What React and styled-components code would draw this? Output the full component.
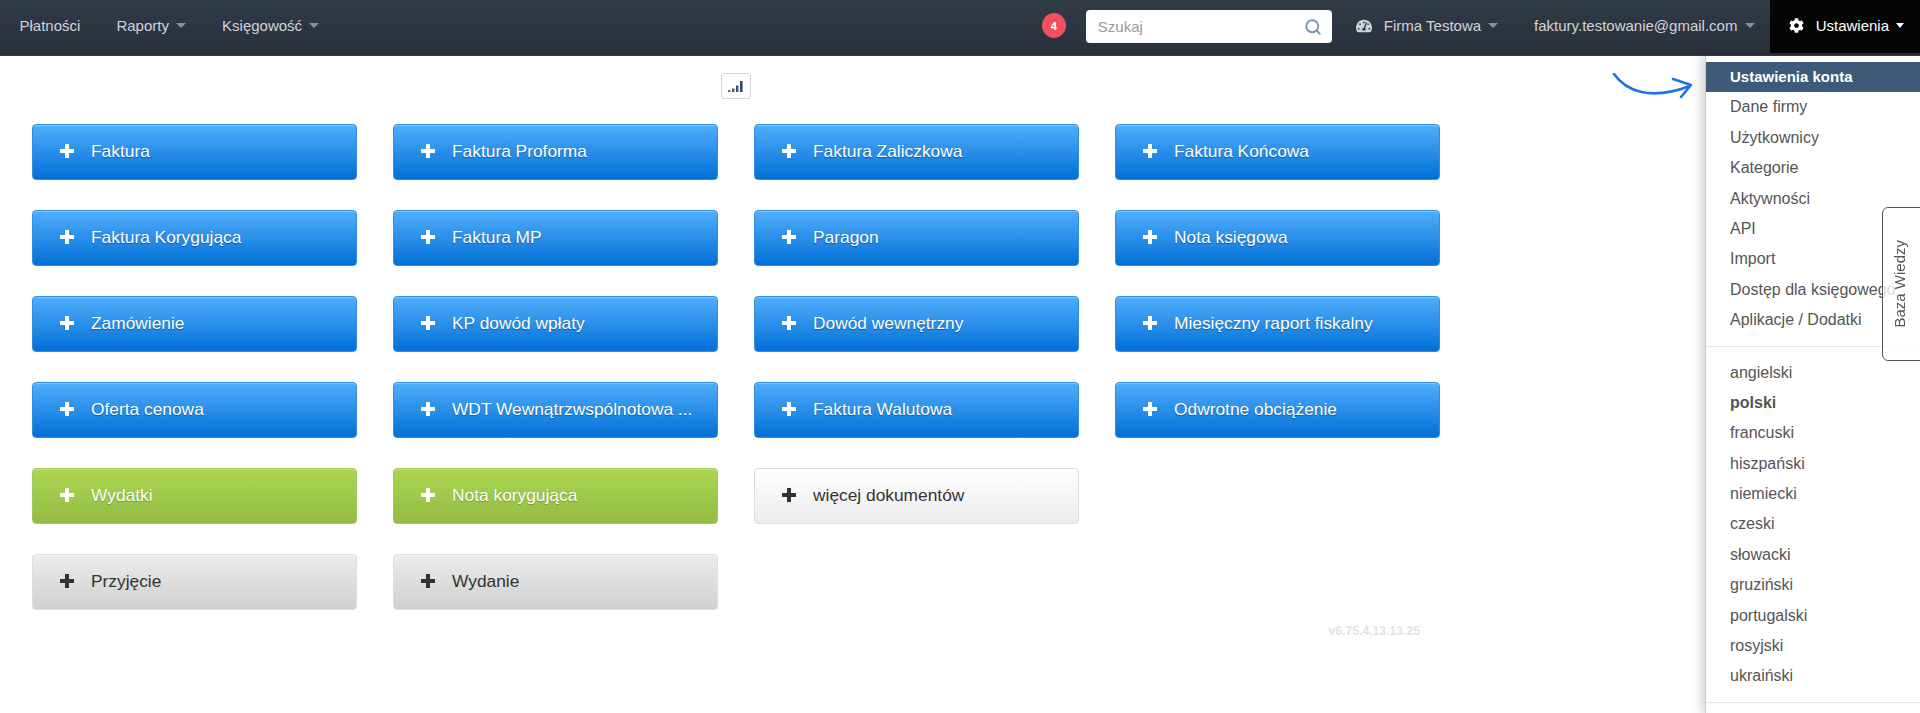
import React from "react";
import styled, { createGlobalStyle } from "styled-components";
import { FaCog, FaTachometerAlt } from "react-icons/fa";
import { FiSearch } from "react-icons/fi";

const documents = [
  { label: "Faktura", kind: "blue" },
  { label: "Faktura Proforma", kind: "blue" },
  { label: "Faktura Zaliczkowa", kind: "blue" },
  { label: "Faktura Końcowa", kind: "blue" },
  { label: "Faktura Korygująca", kind: "blue" },
  { label: "Faktura MP", kind: "blue" },
  { label: "Paragon", kind: "blue" },
  { label: "Nota księgowa", kind: "blue" },
  { label: "Zamówienie", kind: "blue" },
  { label: "KP dowód wpłaty", kind: "blue" },
  { label: "Dowód wewnętrzny", kind: "blue" },
  { label: "Miesięczny raport fiskalny", kind: "blue" },
  { label: "Oferta cenowa", kind: "blue" },
  { label: "WDT Wewnątrzwspólnotowa ...", kind: "blue" },
  { label: "Faktura Walutowa", kind: "blue" },
  { label: "Odwrotne obciążenie", kind: "blue" },
  { label: "Wydatki", kind: "green" },
  { label: "Nota korygująca", kind: "green" },
  { label: "więcej dokumentów", kind: "light" },
  { label: "Przyjęcie", kind: "gray", newRow: true },
  { label: "Wydanie", kind: "gray" },
];

const settingsLinks = [
  "Dane firmy",
  "Użytkownicy",
  "Kategorie",
  "Aktywności",
  "API",
  "Import",
  "Dostęp dla księgowego",
  "Aplikacje / Dodatki",
];

const languages = [
  "angielski",
  "polski",
  "francuski",
  "hiszpański",
  "niemiecki",
  "czeski",
  "słowacki",
  "gruziński",
  "portugalski",
  "rosyjski",
  "ukraiński",
];

const kinds = {
  blue: {
    bg: "linear-gradient(#51aefb, #016fd6)",
    border: "#2f8fdc",
    color: "#fff",
    shadow: "0 1px 1px rgba(0, 0, 0, 0.35)",
  },
  green: {
    bg: "linear-gradient(#aad651, #93bc45)",
    border: "#a2c862",
    color: "#fff",
    shadow: "0 1px 1px rgba(0, 0, 0, 0.25)",
  },
  light: {
    bg: "linear-gradient(#fff, #ececec)",
    border: "#dcdcdc",
    color: "#333",
    shadow: "none",
  },
  gray: {
    bg: "linear-gradient(#ececec, #d0d0d0)",
    border: "#dedede",
    color: "#333",
    shadow: "none",
  },
};

function App() {
  return (
    <>
      <GlobalStyle />
      <Navbar>
        <NavItem>Płatności</NavItem>
        <NavItem>
          Raporty <Caret />
        </NavItem>
        <NavItem>
          Księgowość <Caret />
        </NavItem>
        <NavRight>
          <Badge>4</Badge>
          <SearchBox>
            <SearchInput placeholder="Szukaj" />
            <FiSearch size={18} color="#7f93a8" strokeWidth={2.4} />
          </SearchBox>
          <NavItem>
            <FaTachometerAlt size={16} />
            <NavIconLabel>Firma Testowa</NavIconLabel>
            <Caret />
          </NavItem>
          <UserItem>
            faktury.testowanie@gmail.com <Caret />
          </UserItem>
          <SettingsItem>
            <FaCog size={15} />
            <NavIconLabel>Ustawienia</NavIconLabel>
            <Caret $light />
          </SettingsItem>
        </NavRight>
      </Navbar>

      <Content>
        <ChartRow>
          <ChartButton>
            <svg width="18" height="16" viewBox="0 0 18 16">
              <rect x="1" y="12" width="2.4" height="2" fill="#666" />
              <rect x="5" y="10.5" width="2.4" height="3.5" fill="#4d5a68" />
              <rect x="9" y="7.5" width="2.4" height="6.5" fill="#3f5068" />
              <rect x="13" y="3" width="2.6" height="11" fill="#33486a" />
            </svg>
          </ChartButton>
        </ChartRow>
        <ButtonGrid>
          {documents.map((doc) => (
            <DocButton key={doc.label} $kind={doc.kind} $newRow={doc.newRow}>
              <PlusIcon viewBox="0 0 14 14">
                <path d="M5 0h4v5h5v4H9v5H5V9H0V5h5z" fill="currentColor" />
              </PlusIcon>
              <DocLabel>{doc.label}</DocLabel>
            </DocButton>
          ))}
        </ButtonGrid>
        <Version>v6.75.4.13.13.25</Version>
      </Content>

      <Arrow width="84" height="34" viewBox="0 0 84 34">
        <path
          d="M2 3 C 14 20, 38 30, 78 15 M61 8 L79 14 L69 26"
          fill="none"
          stroke="#1f73e8"
          strokeWidth="2.6"
          strokeLinecap="round"
          strokeLinejoin="round"
        />
      </Arrow>

      <Dropdown>
        <ActiveLink>Ustawienia konta</ActiveLink>
        {settingsLinks.map((name) => (
          <MenuLink key={name}>{name}</MenuLink>
        ))}
        <Divider />
        {languages.map((name) => (
          <MenuLink key={name} $bold={name === "polski"}>
            {name}
          </MenuLink>
        ))}
        <Divider />
      </Dropdown>

      <HelpTab>
        <HelpLabel>Baza Wiedzy</HelpLabel>
      </HelpTab>
    </>
  );
}

export default App;

const GlobalStyle = createGlobalStyle`
  html, body {
    margin: 0;
    height: 100%;
    overflow: hidden;
    background: #fff;
    font-family: "Liberation Sans", Arial, sans-serif;
  }
  * {
    box-sizing: border-box;
  }
`;

const Navbar = styled.nav`
  display: flex;
  align-items: stretch;
  height: 56px;
  padding-left: 1.5px;
  background: linear-gradient(#303b46, #28303c);
  border-bottom: 1px solid #3a3f45;
`;

const NavItem = styled.div`
  display: flex;
  align-items: center;
  padding: 0 18px 2px;
  height: 53px;
  font-size: 15px;
  color: #cfd4d9;
  white-space: pre;
`;

const NavRight = styled.div`
  display: flex;
  align-items: flex-start;
  margin-left: auto;
`;

const NavIconLabel = styled.span`
  margin: 0 4px 0 12px;
`;

const UserItem = styled(NavItem)`
  padding-right: 15px;
`;

const SettingsItem = styled(NavItem)`
  background: #050505;
  color: #fff;
  padding: 0 16px 2px 19px;
`;

const Caret = styled.span`
  display: inline-block;
  margin-left: 3px;
  width: 0;
  height: 0;
  border-left: ${(p) => (p.$light ? 4 : 5)}px solid transparent;
  border-right: ${(p) => (p.$light ? 4 : 5)}px solid transparent;
  border-top: 5px solid ${(p) => (p.$light ? "#fff" : "#8b9198")};
`;

const Badge = styled.span`
  display: flex;
  align-items: center;
  justify-content: center;
  width: 24px;
  height: 25px;
  margin: 13px 20px 0 0;
  border-radius: 50%;
  background: #f0505f;
  color: #fff;
  font-size: 11px;
  font-weight: bold;
`;

const SearchBox = styled.label`
  display: flex;
  align-items: center;
  width: 246px;
  height: 33px;
  margin: 10px 6px 0 0;
  padding: 0 10px 0 12px;
  background: #fff;
  border-radius: 4px;
`;

const SearchInput = styled.input`
  flex: 1;
  min-width: 0;
  border: 0;
  outline: 0;
  padding: 0;
  font: 15px "Liberation Sans", Arial, sans-serif;
  &::placeholder {
    color: #999;
    opacity: 1;
  }
`;

const Content = styled.main`
  width: 1440px;
  padding: 17px 0 0 32px;
`;

const ChartRow = styled.div`
  display: flex;
  justify-content: center;
  width: 1408px;
`;

const ChartButton = styled.button`
  display: flex;
  align-items: center;
  justify-content: center;
  width: 30px;
  height: 26px;
  padding: 0;
  background: #fff;
  border: 1px solid #d5d5d5;
  border-radius: 3px;
`;

const ButtonGrid = styled.div`
  display: grid;
  grid-template-columns: repeat(4, 325px);
  column-gap: 36px;
  row-gap: 30px;
  margin-top: 25px;
`;

const DocButton = styled.button`
  grid-column-start: ${(p) => (p.$newRow ? 1 : "auto")};
  display: flex;
  align-items: center;
  height: 56px;
  padding: 0 0 2px 27px;
  min-width: 0;
  font: 17.35px "Liberation Sans", Arial, sans-serif;
  text-align: left;
  border-radius: 4px;
  background: ${(p) => kinds[p.$kind].bg};
  border: 1px solid ${(p) => kinds[p.$kind].border};
  color: ${(p) => kinds[p.$kind].color};
  text-shadow: ${(p) => kinds[p.$kind].shadow};
  box-shadow: inset 0 1px 0 rgba(255, 255, 255, 0.3);
`;

const PlusIcon = styled.svg`
  flex: none;
  width: 14px;
  height: 14px;
`;

const DocLabel = styled.span`
  margin-left: 17px;
  white-space: nowrap;
`;

const Version = styled.div`
  margin-top: 14px;
  padding-right: 20px;
  text-align: right;
  font-size: 12.2px;
  font-weight: bold;
  color: #e3e3e3;
`;

const Arrow = styled.svg`
  position: absolute;
  top: 71px;
  left: 1612px;
`;

const Dropdown = styled.aside`
  position: absolute;
  top: 56px;
  left: 1705px;
  right: 0;
  bottom: 0;
  overflow: hidden;
  padding-top: 6px;
  background: #fff;
  border-left: 1px solid #ccc;
  box-shadow: -4px 0 10px rgba(0, 0, 0, 0.18);
`;

const MenuLink = styled.div`
  height: 30.4px;
  line-height: 30.4px;
  padding-left: 24px;
  font-size: 16px;
  font-weight: ${(p) => (p.$bold ? "bold" : "normal")};
  color: #555;
  white-space: nowrap;
`;

const ActiveLink = styled(MenuLink)`
  background: #3d5a78;
  color: #fff;
  font-size: 15px;
  font-weight: bold;
`;

const Divider = styled.div`
  height: 1px;
  margin: 10px 0 11px;
  background: #e6e6e6;
`;

const HelpTab = styled.div`
  position: fixed;
  top: 207px;
  left: 1882px;
  right: -8px;
  height: 154px;
  display: flex;
  align-items: center;
  padding-left: 8px;
  background: rgba(255, 255, 255, 0.8);
  border: 1px solid #555;
  border-radius: 6px;
`;

const HelpLabel = styled.span`
  writing-mode: vertical-rl;
  transform: rotate(180deg);
  font-size: 15px;
  color: #555;
  white-space: nowrap;
`;
